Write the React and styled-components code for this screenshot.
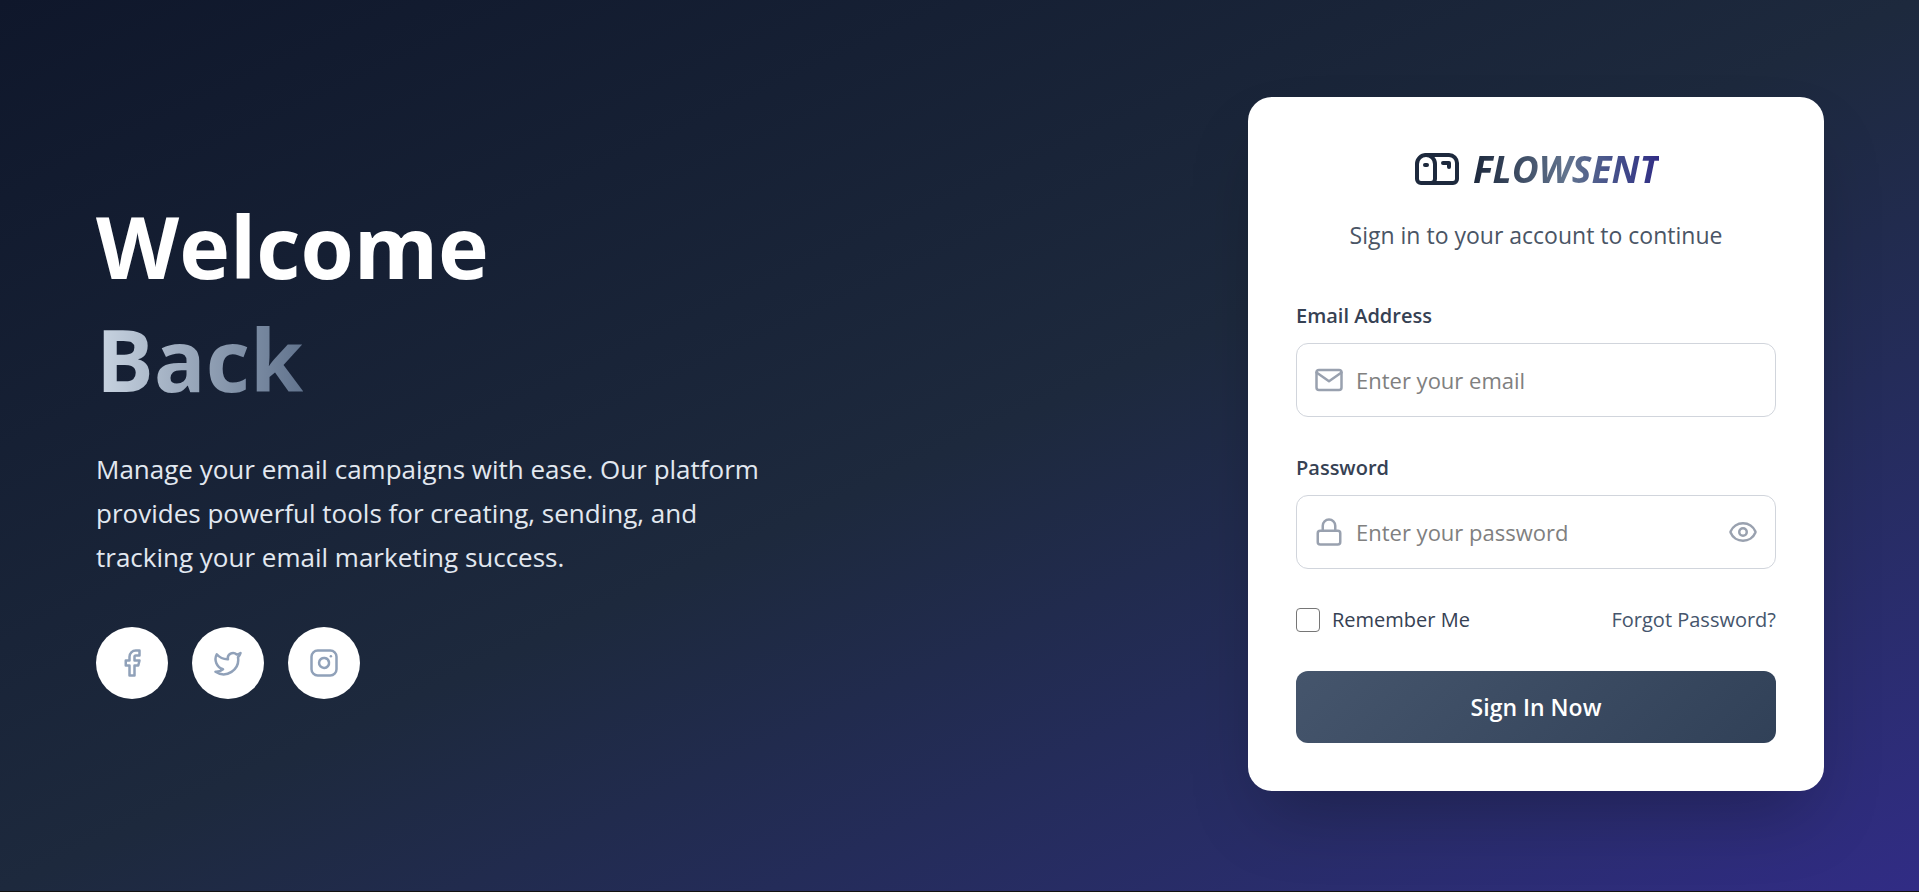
import React from "react";
import styled, { createGlobalStyle } from "styled-components";
import { Lock, Eye, Facebook, Twitter, Instagram, Mailbox } from "lucide-react";
import { FiMail } from "react-icons/fi";

const GlobalStyle = createGlobalStyle`
  *, *::before, *::after { box-sizing: border-box; }
  body {
    margin: 0;
    background: #121212;
    font-family: "Open Sans", "Noto Sans", sans-serif;
  }
  h1, p { margin: 0; }
`;

const Page = styled.main`
  min-height: calc(100vh - 1px);
  display: flex;
  align-items: center;
  justify-content: space-between;
  gap: 48px;
  padding: 93px 95px 96px 96px;
  background: linear-gradient(to bottom right in oklab, #0f172b, #1d293d, #312c85);
`;

const Intro = styled.section`
  flex: 0 1 672px;
  display: flex;
  flex-direction: column;
  align-items: flex-start;
`;

const Heading = styled.h1`
  display: flex;
  flex-direction: column;
  align-items: flex-start;
  font-size: 86px;
  line-height: 113px;
  font-weight: 700;
  color: #ffffff;
`;

const Accent = styled.span`
  color: transparent;
  background: linear-gradient(to right in oklab, #cad5e2, #62748e);
  background-clip: text;
`;

const Lead = styled.p`
  margin-top: 32px;
  font-size: 26px;
  line-height: 44px;
  color: #e2e8f0;
`;

const Socials = styled.nav`
  display: flex;
  gap: 24px;
  margin-top: 48px;
`;

const SocialLink = styled.a`
  display: grid;
  place-items: center;
  width: 72px;
  height: 72px;
  border-radius: 50%;
  background: #ffffff;
  color: #90a1b9;
`;

const Card = styled.section`
  flex: 0 0 576px;
  padding: 48px;
  border-radius: 24px;
  background: #ffffff;
  box-shadow: 0 36px 72px -18px rgba(0, 0, 0, 0.25);
`;

const Brand = styled.div`
  display: flex;
  align-items: center;
  justify-content: center;
  gap: 12px;
  height: 48px;
  color: #1d293d;
`;

const BrandName = styled.span`
  font-size: 37px;
  line-height: 48px;
  font-weight: 700;
  font-style: italic;
  color: transparent;
  background: linear-gradient(to right in oklab, #1d293d, #62748e, #312c85);
  background-clip: text;
`;

const Subtitle = styled.p`
  margin-top: 24px;
  font-size: 23px;
  line-height: 36px;
  text-align: center;
  color: #4a5565;
`;

const Form = styled.form`
  display: flex;
  flex-direction: column;
  margin-top: 48px;
`;

const Field = styled.div`
  display: flex;
  flex-direction: column;
  gap: 12px;
  margin-bottom: 36px;
`;

const Label = styled.label`
  font-size: 20px;
  line-height: 30px;
  font-weight: 600;
  color: #364153;
`;

const InputBox = styled.div`
  display: flex;
  align-items: center;
  gap: 12px;
  height: 74px;
  padding: 0 17px;
  border: 1px solid #d1d5dc;
  border-radius: 12px;
  color: #99a1af;
`;

const Input = styled.input`
  flex: 1;
  min-width: 0;
  height: 100%;
  padding: 0;
  border: 0;
  outline: 0;
  background: transparent;
  font: inherit;
  font-size: 22px;
  color: #1d293d;
  &::placeholder { color: #808080; opacity: 1; }
`;

const IconButton = styled.button`
  display: flex;
  padding: 0;
  border: 0;
  background: none;
  color: inherit;
  cursor: pointer;
`;

const Options = styled.div`
  display: flex;
  align-items: center;
  justify-content: space-between;
  font-size: 20px;
  line-height: 30px;
`;

const Remember = styled.label`
  display: flex;
  align-items: center;
  gap: 12px;
  color: #364153;
`;

const Checkbox = styled.input`
  appearance: none;
  width: 24px;
  height: 24px;
  margin: 0;
  border: 1px solid #767676;
  border-radius: 4px;
  background: #ffffff;
  &:checked { background: #45556c; }
`;

const ForgotLink = styled.a`
  color: #45556c;
  text-decoration: none;
`;

const SubmitButton = styled.button`
  height: 72px;
  margin-top: 36px;
  border: 0;
  border-radius: 12px;
  background: linear-gradient(135deg, #45556c, #314158);
  color: #ffffff;
  font: inherit;
  font-size: 23px;
  font-weight: 600;
  cursor: pointer;
`;

export default function App() {
  return (
    <>
      <GlobalStyle />
      <Page>
        <Intro>
          <Heading>
            <span>Welcome</span>
            <Accent>Back</Accent>
          </Heading>
          <Lead>
            Manage your email campaigns with ease. Our platform provides powerful tools for
            creating, sending, and tracking your email marketing success.
          </Lead>
          <Socials aria-label="Social media">
            <SocialLink href="#facebook" aria-label="Facebook"><Facebook size={30} /></SocialLink>
            <SocialLink href="#twitter" aria-label="Twitter"><Twitter size={30} /></SocialLink>
            <SocialLink href="#instagram" aria-label="Instagram"><Instagram size={30} /></SocialLink>
          </Socials>
        </Intro>
        <Card>
          <Brand>
            <Mailbox size={48} />
            <BrandName>FLOWSENT</BrandName>
          </Brand>
          <Subtitle>Sign in to your account to continue</Subtitle>
          <Form onSubmit={(e) => e.preventDefault()}>
            <Field>
              <Label htmlFor="email">Email Address</Label>
              <InputBox>
                <FiMail size={30} />
                <Input id="email" type="email" placeholder="Enter your email" />
              </InputBox>
            </Field>
            <Field>
              <Label htmlFor="password">Password</Label>
              <InputBox>
                <Lock size={30} />
                <Input id="password" type="password" placeholder="Enter your password" />
                <IconButton type="button" aria-label="Show password"><Eye size={30} /></IconButton>
              </InputBox>
            </Field>
            <Options>
              <Remember htmlFor="remember">
                <Checkbox id="remember" type="checkbox" />
                Remember Me
              </Remember>
              <ForgotLink href="#forgot">Forgot Password?</ForgotLink>
            </Options>
            <SubmitButton type="submit">Sign In Now</SubmitButton>
          </Form>
        </Card>
      </Page>
    </>
  );
}
